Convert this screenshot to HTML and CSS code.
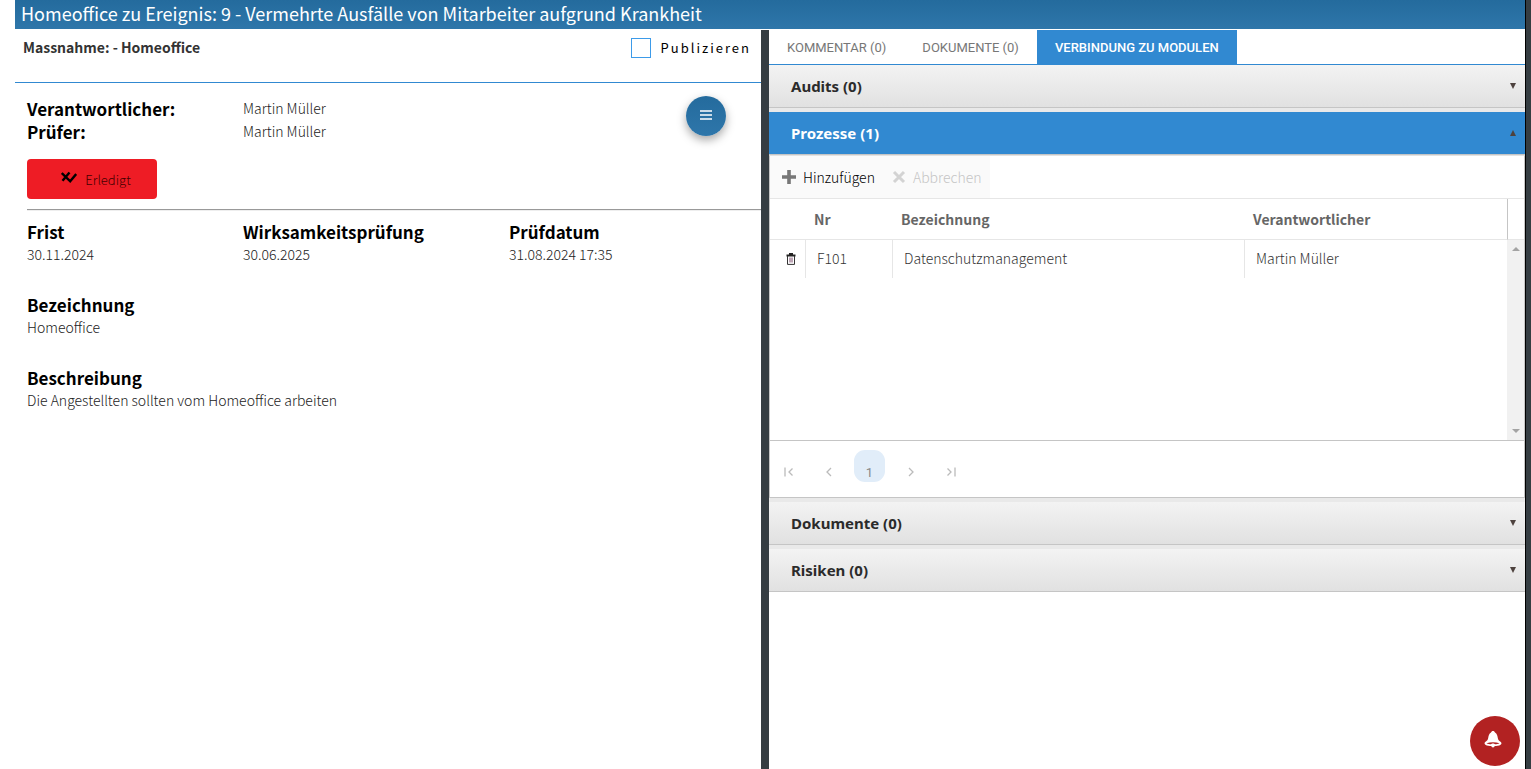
FILE: index.html
```html
<!DOCTYPE html>
<html lang="de">
<head>
    <meta charset="UTF-8">
    <meta name="viewport" content="width=device-width, initial-scale=1.0">
    <title>Massnahme - Homeoffice</title>
    <link rel="stylesheet" href="styles.css">
</head>
<body>
    <div class="window">
        <h1 class="window-title">Homeoffice zu Ereignis: 9 - Vermehrte Ausfälle von Mitarbeiter aufgrund Krankheit</h1>

        <div class="split">
            <!-- Left pane: details of the measure -->
            <main class="details">
                <div class="details-head">
                    <h2>Massnahme: - Homeoffice</h2>
                    <label class="publish" for="publish">
                        <input type="checkbox" id="publish" name="publish">
                        Publizieren
                    </label>
                </div>

                <div class="details-body">
                    <button type="button" class="menu-button" aria-label="Menü">
                        <svg width="14" height="10" viewBox="0 0 14 10"><path d="M1 1h12M1 5h12M1 9h12" stroke="#fff" stroke-width="1.4"/></svg>
                    </button>

                    <dl class="people">
                        <dt>Verantwortlicher:</dt>
                        <dd>Martin Müller</dd>
                        <dt>Prüfer:</dt>
                        <dd>Martin Müller</dd>
                    </dl>

                    <button type="button" class="done-button">
                        <svg width="16" height="16" viewBox="0 0 16 16"><path d="M.8 2l8.400 8.300L15.200 3M1.500 9.800L8.500 1.500" fill="none" stroke="#000" stroke-width="2.400"/></svg>
                        <span>Erledigt</span>
                    </button>

                    <hr>

                    <dl class="fields">
                        <div>
                            <dt>Frist</dt>
                            <dd>30.11.2024</dd>
                        </div>
                        <div>
                            <dt>Wirksamkeitsprüfung</dt>
                            <dd>30.06.2025</dd>
                        </div>
                        <div>
                            <dt>Prüfdatum</dt>
                            <dd>31.08.2024 17:35</dd>
                        </div>
                        <div class="wide">
                            <dt>Bezeichnung</dt>
                            <dd>Homeoffice</dd>
                        </div>
                        <div class="wide">
                            <dt>Beschreibung</dt>
                            <dd>Die Angestellten sollten vom Homeoffice arbeiten</dd>
                        </div>
                    </dl>
                </div>
            </main>

            <div class="splitter"></div>

            <!-- Right pane: tabs and module links -->
            <aside class="modules">
                <nav class="tabs">
                    <button type="button">KOMMENTAR (0)</button>
                    <button type="button">DOKUMENTE (0)</button>
                    <button type="button" class="active">VERBINDUNG ZU MODULEN</button>
                </nav>

                <div class="accordion">
                    <button type="button" class="section-head">Audits (0) <span class="arrow"></span></button>
                    <button type="button" class="section-head open">Prozesse (1) <span class="arrow"></span></button>

                    <div class="grid">
                        <div class="toolbar">
                            <button type="button">
                                <svg width="14" height="14" viewBox="0 0 14 14"><path d="M7 0v14M0 7h14" stroke="#777" stroke-width="3.600"/></svg>
                                Hinzufügen
                            </button>
                            <button type="button" disabled>
                                <svg width="14" height="14" viewBox="0 0 14 14"><path d="M2 2l10 10M12 2L2 12" stroke="#d3d3d3" stroke-width="3"/></svg>
                                Abbrechen
                            </button>
                        </div>

                        <div class="grid-content">
                            <table>
                                <thead>
                                    <tr>
                                        <th class="col-action"></th>
                                        <th class="col-nr">Nr</th>
                                        <th class="col-name">Bezeichnung</th>
                                        <th>Verantwortlicher</th>
                                    </tr>
                                </thead>
                                <tbody>
                                    <tr>
                                        <td>
                                            <button type="button" class="delete-button" aria-label="Löschen">
                                                <svg width="10" height="12" viewBox="0 0 10 12"><path d="M.5 2.500h9M3 1h4" stroke="#222" stroke-width="1.800"/><path d="M1.500 3v8.400h7V3" fill="none" stroke="#333"/><path d="M4 4.500v5M6 4.500v5" stroke="#7a4a6a"/></svg>
                                            </button>
                                        </td>
                                        <td>F101</td>
                                        <td>Datenschutzmanagement</td>
                                        <td>Martin Müller</td>
                                    </tr>
                                </tbody>
                            </table>
                            <div class="scroll-column">
                                <div class="scroll-corner"></div>
                                <div class="scrollbar">
                                    <span class="scroll-up"></span>
                                    <span class="scroll-down"></span>
                                </div>
                            </div>
                        </div>

                        <div class="pager">
                            <button type="button" aria-label="Erste Seite"><svg width="10" height="10" viewBox="0 0 10 10"><path d="M1 .5v9M8.500 1.500L5 5l3.500 3.500"/></svg></button>
                            <button type="button" aria-label="Vorherige Seite"><svg width="10" height="10" viewBox="0 0 10 10"><path d="M7 1L3 5l4 4"/></svg></button>
                            <button type="button" class="current">1</button>
                            <button type="button" aria-label="Nächste Seite"><svg width="10" height="10" viewBox="0 0 10 10"><path d="M3 1l4 4-4 4"/></svg></button>
                            <button type="button" aria-label="Letzte Seite"><svg width="10" height="10" viewBox="0 0 10 10"><path d="M9 .5v9M1.500 1.500L5 5 1.500 8.500"/></svg></button>
                        </div>
                    </div>

                    <button type="button" class="section-head">Dokumente (0) <span class="arrow"></span></button>
                    <button type="button" class="section-head">Risiken (0) <span class="arrow"></span></button>
                </div>
            </aside>
        </div>
    </div>

    <button type="button" class="alert-button" aria-label="Benachrichtigungen">
        <svg width="18" height="17" viewBox="0 0 18 17"><path d="M9 0c1 0 1.700.6 2 1.500 2 1 2.500 3.500 2.800 5.500.3 2 1.200 2.800 2.700 3.800 1.700 1.200 1 3.200-1.300 3.600-2 .4-4.200.6-6.200.6s-4.200-.2-6.200-.6C.5 14-.2 12 1.500 10.800 3 9.800 3.900 9 4.200 7c.3-2 .8-4.500 2.800-5.500C7.300.6 8 0 9 0z" fill="#fff"/><path d="M2.500 12.300c4-1.300 9-1.300 13 0-1.500.8-3 1-4.500 1-.5-1-3.500-1-4 0-1.500 0-3-.2-4.500-1z" fill="#b22222"/><circle cx="9" cy="14.700" r="1.700" fill="#fff"/></svg>
    </button>
</body>
</html>
```
FILE: styles.css
```css
* {
    box-sizing: border-box;
}

body {
    margin: 0;
    background: #353d42;
    color: #333;
    font-family: "Noto Sans CJK SC", "Noto Sans", sans-serif;
    font-size: 14px;
    font-weight: 300;
}

h1, h2, dl, dd {
    margin: 0;
}

button {
    margin: 0;
    padding: 0;
    border: none;
    background: none;
    color: inherit;
    font: inherit;
    cursor: pointer;
}

svg {
    display: block;
    flex: none;
}

.window {
    display: flex;
    flex-direction: column;
    min-height: 100vh;
    margin-right: 5px;
    padding-left: 15px;
    border-right: 1px solid #000;
    background: #fff;
}

.window-title {
    height: 29px;
    margin-bottom: 1px;
    padding-left: 6px;
    background: linear-gradient(#246b9d, #2e76aa);
    color: #fff;
    font-size: 18px;
    font-weight: 400;
    line-height: 26px;
    white-space: nowrap;
}

.split {
    display: flex;
    flex: 1;
}

.splitter {
    width: 8px;
    background: #353d42;
}

/* Left pane */
.details {
    flex: 1;
    min-width: 0;
}

.details-head {
    display: flex;
    justify-content: space-between;
    height: 53px;
    padding: 8px 10px 0 8px;
    border-bottom: 1px solid #3189d1;
}

.details-head h2 {
    font-size: 14px;
    font-weight: 700;
    line-height: 18px;
}

.publish {
    display: flex;
    gap: 10px;
    height: 20px;
    color: #000;
    font-size: 13px;
    font-weight: 400;
    line-height: 20px;
    letter-spacing: 2px;
}

.publish input {
    appearance: none;
    width: 20px;
    height: 20px;
    margin: 0;
    border: 1px solid #3d9be9;
    background: #fff;
}

.details-body {
    position: relative;
    padding: 14px 0 0 12px;
}

.details-body dt {
    color: #000;
    font-size: 17px;
    font-weight: 700;
    line-height: 23px;
}

.details-body dd {
    color: #222;
    font-size: 14px;
    line-height: 22px;
}

.menu-button {
    position: absolute;
    top: 13px;
    right: 35px;
    display: flex;
    align-items: center;
    justify-content: center;
    width: 40px;
    height: 40px;
    padding-bottom: 2px;
    border-radius: 50%;
    background: linear-gradient(#246b9d, #2e76aa);
    box-shadow: 0 4px 10px rgba(0, 0, 0, 0.35);
}

.people {
    display: grid;
    grid-template-columns: 216px 1fr;
}

.done-button {
    display: flex;
    align-items: center;
    justify-content: center;
    gap: 8px;
    width: 130px;
    height: 40px;
    margin: 16px 0 10px;
    padding-left: 8px;
    border-radius: 4px;
    background: #ee1c25;
    color: #400;
    font-size: 13px;
}

.details-body hr {
    height: 2px;
    margin: 0 0 9px;
    border: none;
    border-top: 1px solid #999;
    border-bottom: 1px solid #eee;
}

.fields {
    display: grid;
    grid-template-columns: 216px 266px 1fr;
    row-gap: 28px;
}

.fields .wide {
    grid-column: 1 / -1;
}

/* Right pane */
.modules {
    width: 756px;
}

.tabs {
    display: flex;
    height: 35px;
    border-bottom: 1px solid #3189d1;
    font-family: Roboto, sans-serif;
    font-size: 13px;
    font-weight: 400;
}

.tabs button {
    padding: 0 18px;
    color: #777;
}

.tabs .active {
    background: #3189d1;
    color: #fff;
    font-weight: 500;
}

.accordion {
    display: flex;
    flex-direction: column;
    gap: 4px;
    background: #e9e9e9;
}

.section-head {
    display: flex;
    align-items: center;
    justify-content: space-between;
    height: 43px;
    padding: 0 9px 0 22px;
    border-bottom: 1px solid #c5c5c5;
    background: linear-gradient(#f3f3f3, #e1e1e1);
    color: #2b2b2b;
    font-family: "Noto Sans", sans-serif;
    font-size: 15px;
    font-weight: 700;
}

.arrow {
    border: 3px solid transparent;
    border-top: 6px solid #4d423e;
    border-bottom: none;
}

.section-head.open {
    margin-bottom: -4px;
    background: #3189d1;
    color: #fff;
}

.open .arrow {
    border-top: none;
    border-bottom: 6px solid #4d423e;
}

.grid {
    border: 1px solid #c5c5c5;
    border-top-color: #e2e2e2;
    background: #fff;
}

.toolbar {
    display: flex;
    height: 43px;
    border-bottom: 1px solid #e6e6e6;
}

.toolbar button {
    display: flex;
    align-items: center;
    gap: 7px;
    padding: 0 5px 0 12px;
    background: #fafafa;
    color: #000;
    font-size: 14px;
}

.toolbar button:disabled {
    padding-right: 8px;
    color: #c5c5c5;
}

.grid-content {
    display: flex;
    height: 242px;
    border-bottom: 1px solid #c5c5c5;
}

.grid table {
    flex: 1;
    align-self: flex-start;
    table-layout: fixed;
    border-collapse: separate;
    border-spacing: 0;
}

.grid th {
    height: 41px;
    padding: 0 9px;
    border-bottom: 1px solid #e6e6e6;
    color: #666;
    font-size: 14px;
    font-weight: 700;
    text-align: left;
}

.grid td {
    height: 38px;
    padding: 0 11px 2px;
    border-left: 1px solid #e6e6e6;
    font-size: 14px;
}

.grid td:first-child {
    padding: 0;
    border-left: none;
}

.col-action {
    width: 35px;
}

.col-nr {
    width: 87px;
}

.col-name {
    width: 352px;
}

.delete-button {
    display: block;
    margin-left: 16px;
}

.scroll-column {
    display: flex;
    flex-direction: column;
    width: 17px;
}

.scroll-corner {
    height: 41px;
    border-bottom: 1px solid #e6e6e6;
    border-left: 1px solid #c5c5c5;
}

.scrollbar {
    display: flex;
    flex: 1;
    flex-direction: column;
    align-items: center;
    justify-content: space-between;
    padding: 7px 0;
    background: #f1f1f1;
}

.scroll-up {
    border: 4px solid transparent;
    border-top: none;
    border-bottom-color: #a3a3a3;
}

.scroll-down {
    border: 4px solid transparent;
    border-top-color: #a3a3a3;
    border-bottom: none;
}

.pager {
    display: flex;
    align-items: center;
    gap: 9px;
    height: 56px;
    padding: 0 3px;
}

.pager button {
    display: flex;
    align-items: center;
    justify-content: center;
    width: 31px;
    height: 32px;
    padding-top: 6px;
    border-radius: 11px;
}

.pager path {
    fill: none;
    stroke: #bbb;
    stroke-width: 1.3;
}

.pager .current {
    margin: 0 1px 6px;
    padding-top: 12px;
    background: #e1edf9;
    color: #888;
    font-family: Roboto, sans-serif;
    font-size: 13px;
    font-weight: 400;
}

.alert-button {
    position: fixed;
    right: 11px;
    bottom: 3px;
    display: flex;
    align-items: center;
    justify-content: center;
    width: 50px;
    height: 50px;
    padding: 0 5px 4px 0;
    border-radius: 50%;
    background: #b22222;
}
```
